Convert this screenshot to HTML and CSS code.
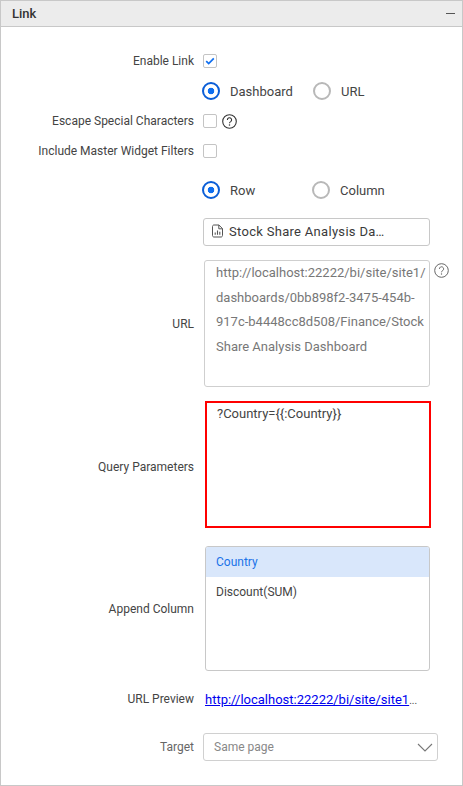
FILE: index.html
```html
<!DOCTYPE html>
<html lang="en">
<head>
<meta charset="utf-8">
<title>Link</title>
<link rel="stylesheet" href="styles.css">
</head>
<body>
<section class="panel">
  <header class="panel-head">
    <span class="panel-title">Link</span>
    <span class="collapse" aria-hidden="true"></span>
  </header>
  <div class="panel-body">
    <div class="row r-enable">
      <label class="lbl">Enable Link</label>
      <div class="ctl"><span class="check on"><svg width="12" height="12" viewBox="0 0 12 12"><path d="M2.2 6.2 4.7 8.6 9.8 3.4" fill="none" stroke="#0f6ff0" stroke-width="1.7"/></svg></span></div>
    </div>
    <div class="row r-source">
      <span class="lbl"></span>
      <div class="ctl radios">
        <span class="radio-item w-dash"><span class="radio on"></span><span>Dashboard</span></span>
        <span class="radio-item"><span class="radio"></span><span>URL</span></span>
      </div>
    </div>
    <div class="row r-escape">
      <label class="lbl">Escape Special Characters</label>
      <div class="ctl"><span class="check"></span>
        <svg class="help" width="15" height="15" viewBox="0 0 15 15"><circle cx="7.5" cy="7.5" r="6.8" fill="none" stroke="#333" stroke-width="1.1"/><path d="M5.4 5.9a2.1 2.1 0 1 1 3.3 1.7c-.8.5-1.2.9-1.2 1.7" fill="none" stroke="#333" stroke-width="1.1"/><circle cx="7.5" cy="11" r=".75" fill="#333"/></svg>
      </div>
    </div>
    <div class="row r-master">
      <label class="lbl">Include Master Widget Filters</label>
      <div class="ctl"><span class="check"></span></div>
    </div>
    <div class="row r-layout">
      <span class="lbl"></span>
      <div class="ctl radios">
        <span class="radio-item w-row"><span class="radio on"></span><span>Row</span></span>
        <span class="radio-item"><span class="radio"></span><span>Column</span></span>
      </div>
    </div>
    <div class="row r-button">
      <span class="lbl"></span>
      <button class="pick" type="button">
        <svg width="13" height="14" viewBox="0 0 13 14"><path d="M1.5 2.5c0-.8.6-1.5 1.4-1.5h5l3.6 3.6v6.9c0 .8-.6 1.5-1.4 1.5H2.9c-.8 0-1.4-.7-1.4-1.5z" fill="none" stroke="#555" stroke-width="1"/><path d="M7.8 1v3.8h3.7" fill="none" stroke="#555" stroke-width="1"/><path d="M4.2 10.8V8.6M6.5 10.8V6.4M8.8 10.8V7.8" stroke="#555" stroke-width="1.1"/></svg>
        <span>Stock Share Analysis Da…</span>
      </button>
    </div>
    <div class="row r-url">
      <label class="lbl">URL</label>
      <div class="ctl url-ctl">
        <div class="url-box">http://localhost:22222/bi/site/site1/<br>dashboards/0bb898f2-3475-454b-<br>917c-b4448cc8d508/Finance/Stock<br>Share Analysis Dashboard</div>
        <svg class="help-url" width="15" height="15" viewBox="0 0 15 15"><circle cx="7.5" cy="7.5" r="6.8" fill="none" stroke="#666" stroke-width="1"/><path d="M5.4 5.9a2.1 2.1 0 1 1 3.3 1.7c-.8.5-1.2.9-1.2 1.7" fill="none" stroke="#666" stroke-width="1"/><circle cx="7.5" cy="11" r=".7" fill="#666"/></svg>
      </div>
    </div>
    <div class="row r-query">
      <label class="lbl lbl-query">Query Parameters</label>
      <div class="query-box">?Country={{:Country}}</div>
    </div>
    <div class="row r-append">
      <label class="lbl">Append Column</label>
      <ul class="list">
        <li class="selected">Country</li>
        <li>Discount(SUM)</li>
      </ul>
    </div>
    <div class="row r-preview">
      <label class="lbl">URL Preview</label>
      <div class="preview"><a href="#">http://localhost:22222/bi/site/site1</a><span>...</span></div>
    </div>
    <div class="row r-target">
      <label class="lbl muted">Target</label>
      <div class="select">
        <span>Same page</span>
        <svg width="16" height="9" viewBox="0 0 16 9"><path d="M1 1 8 8 15 1" fill="none" stroke="#777" stroke-width="1.1"/></svg>
      </div>
    </div>
  </div>
</section>
</body>
</html>
```
FILE: styles.css
```css
* { box-sizing: border-box; }
html, body { margin: 0; padding: 0; }
body {
  width: 463px;
  height: 786px;
  background: #fff;
  font-family: Roboto, "Liberation Sans", sans-serif;
  font-size: 12px;
  color: #333;
  overflow: hidden;
}
.panel {
  height: 786px;
  border: 1px solid #c8c8c8;
  display: flex;
  flex-direction: column;
}
.panel-head {
  height: 26px;
  flex: none;
  background: #ececec;
  border-bottom: 1px solid #c8c8c8;
  display: flex;
  align-items: center;
  justify-content: space-between;
  padding: 0 3px 0 11px;
}
.panel-title { font-size: 13px; font-weight: 500; color: #333; }
.collapse { width: 9px; height: 1px; margin-right: 4px; border-top: 1.5px solid #555; }
.panel-body { flex: 1; }

.row { display: flex; align-items: center; }
.lbl {
  width: 193px;
  flex: none;
  text-align: right;
  color: #444;
  font-size: 12px;
}
.lbl-query { padding-top: 4px; }
.muted { color: #666; }
.ctl { display: flex; align-items: center; margin-left: 9px; }

.r-enable { height: 14px; margin-top: 27px; }
.r-source { height: 18px; margin-top: 14px; }
.r-escape { height: 14px; margin-top: 14px; }
.r-master { height: 14px; margin-top: 16px; }
.r-layout { height: 18px; margin-top: 23px; }
.r-button { height: 28px; margin-top: 19px; }
.r-url { height: 127px; margin-top: 14px; }
.r-query { height: 127px; margin-top: 14px; }
.r-append { height: 125px; margin-top: 18px; }
.r-preview { height: 16px; margin-top: 20px; }
.r-target { height: 28px; margin-top: 26px; }

.check {
  width: 14px;
  height: 14px;
  border: 1px solid #c4c4c4;
  border-radius: 2px;
  display: flex;
  align-items: center;
  justify-content: center;
  background: #fff;
}
.help { margin-left: 5px; }

.radios { margin-left: 8px; font-size: 13px; color: #444; }
.radio-item { display: flex; align-items: center; gap: 10px; }
.w-dash { width: 111px; }
.w-row { width: 110px; }
.radio {
  width: 18px;
  height: 18px;
  border-radius: 50%;
  border: 2px solid #b8b8b8;
  flex: none;
  background: #fff;
}
.radio.on {
  border-color: #0b5ed7;
  background: radial-gradient(circle, #0f6ff0 0 3px, #fff 3.6px);
}

.pick {
  margin: 0 0 0 9px;
  width: 227px;
  height: 28px;
  border: 1px solid #c8c8c8;
  border-radius: 3px;
  background: #fff;
  display: flex;
  align-items: center;
  gap: 5px;
  padding: 0 0 2px 7px;
  font: 400 13px Roboto, "Liberation Sans", sans-serif;
  letter-spacing: .3px;
  color: #3a3a3a;
}
.url-ctl { align-self: stretch; align-items: flex-start; margin-left: 10px; }
.url-box {
  width: 226px;
  height: 127px;
  border: 1px solid #cfcfcf;
  border-radius: 3px;
  padding: 0 0 0 11px;
  font-size: 13px;
  line-height: 24.6px;
  color: #777;
  white-space: nowrap;
  overflow: hidden;
}
.help-url { margin: 3px 0 0 4px; }
.query-box {
  margin-left: 11px;
  width: 226px;
  height: 127px;
  border: 2px solid #f00;
  padding: 3px 0 0 10px;
  font-size: 13px;
  line-height: 15px;
  color: #444;
}
.list {
  margin: 0 0 0 11px;
  padding: 0;
  list-style: none;
  width: 225px;
  height: 125px;
  border: 1px solid #c8c8c8;
  border-radius: 3px;
  overflow: hidden;
  font-size: 12px;
  color: #444;
}
.list li { height: 30px; line-height: 30px; padding-left: 10px; }
.list li.selected { background: #d9e7fb; color: #1a73e8; }
.preview {
  margin-left: 11px;
  font-size: 13px;
  color: #444;
  white-space: nowrap;
}
.preview a { color: #00e; text-decoration: underline; }
.preview span { font-size: 10px; }
.select {
  margin-left: 9px;
  width: 235px;
  height: 28px;
  border: 1px solid #d0d0d0;
  border-radius: 3px;
  display: flex;
  align-items: center;
  justify-content: space-between;
  padding: 0 4px 0 10px;
  font-size: 12px;
  color: #888;
}
```
